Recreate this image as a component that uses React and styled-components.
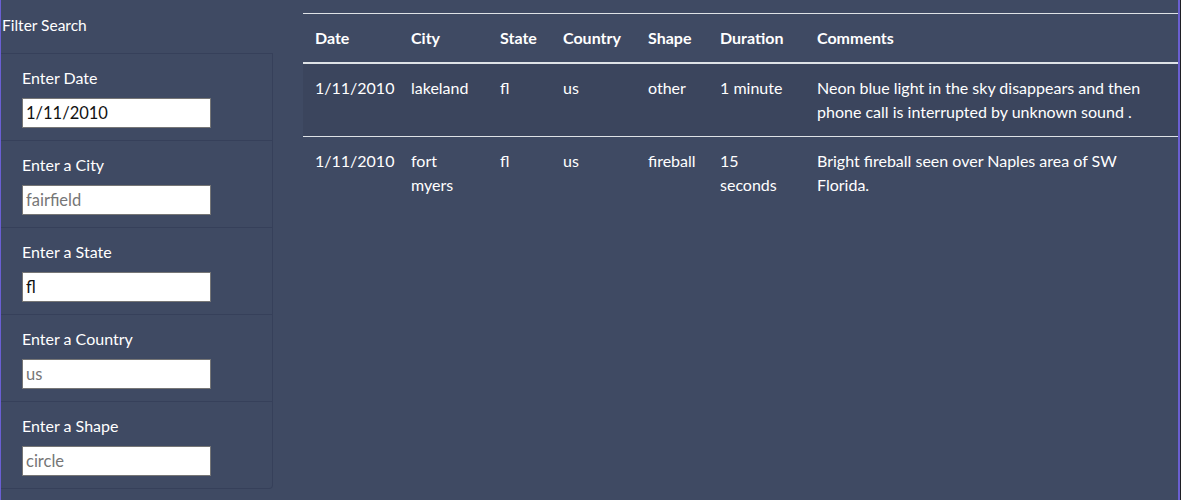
import React from "react";
import styled, { createGlobalStyle } from "styled-components";

const GlobalStyle = createGlobalStyle`
  html, body {
    margin: 0;
    padding: 0;
    background: #1f1f24;
  }
  body {
    font-family: Lato, "Liberation Sans", sans-serif;
    font-size: 16px;
    line-height: 1.5;
    color: #ffffff;
  }
  * { box-sizing: border-box; }
`;

const Frame = styled.div`
  width: 1180px;
  min-height: 500px;
  background: #3f4a63;
  border-left: 1px solid #6a5fd2;
  border-right: 2px solid #6a5fd2;
  display: grid;
  grid-template-columns: 272px 1fr;
  column-gap: 30px;
  align-items: start;
`;

const Sidebar = styled.aside`
  display: flex;
  flex-direction: column;
`;

const SidebarTitle = styled.div`
  font-size: 15.5px;
  line-height: 24px;
  padding: 13px 0 16px 1px;
`;

const FilterList = styled.ul`
  list-style: none;
  margin: 0;
  padding: 0;
  border: 1px solid #36405a;
  border-left: none;
  border-radius: 0 0 4px 0;
`;

const FilterItem = styled.li`
  padding: 12px 20px 12px 21px;
  border-top: ${(p) => (p.$first ? "none" : "1px solid #36405a")};
  display: flex;
  flex-direction: column;
  align-items: flex-start;
`;

const Label = styled.label`
  font-size: 16px;
  line-height: 24px;
  margin-bottom: 8px;
  color: #ffffff;
`;

const Input = styled.input`
  width: 189px;
  height: 30px;
  border: 1px solid #767676;
  padding: 1px 3px;
  font-family: Lato, "Liberation Sans", sans-serif;
  font-size: 16.5px;
  color: #111;
  background: #fff;
  &::placeholder {
    color: #767676;
  }
`;

const Main = styled.main`
  padding-top: 13px;
`;

const Table = styled.table`
  width: 875px;
  border-collapse: collapse;
  table-layout: fixed;
`;

const Th = styled.th`
  text-align: left;
  font-weight: 700;
  padding: 12px;
  line-height: 24px;
  border-top: 1px solid #dee2e6;
  border-bottom: 2px solid #dee2e6;
  vertical-align: bottom;
`;

const Row = styled.tr`
  background: ${(p) => (p.$striped ? "rgba(0,0,0,0.06)" : "transparent")};
`;

const Td = styled.td`
  padding: 12px;
  line-height: 24px;
  vertical-align: top;
  border-top: ${(p) => (p.$first ? "none" : "1px solid #dee2e6")};
`;

const filters = [
  { label: "Enter Date", value: "1/11/2010" },
  { label: "Enter a City", placeholder: "fairfield" },
  { label: "Enter a State", value: "fl" },
  { label: "Enter a Country", placeholder: "us" },
  { label: "Enter a Shape", placeholder: "circle" },
];

const columns = [
  { name: "Date", width: 96 },
  { name: "City", width: 89 },
  { name: "State", width: 63 },
  { name: "Country", width: 85 },
  { name: "Shape", width: 72 },
  { name: "Duration", width: 97 },
  { name: "Comments" },
];

const rows = [
  ["1/11/2010", "lakeland", "fl", "us", "other", "1 minute", "Neon blue light in the sky disappears and then phone call is interrupted by unknown sound ."],
  ["1/11/2010", "fort myers", "fl", "us", "fireball", "15 seconds", "Bright fireball seen over Naples area of SW Florida."],
];

export default function App() {
  return (
    <>
      <GlobalStyle />
      <Frame>
        <Sidebar>
          <SidebarTitle>Filter Search</SidebarTitle>
          <FilterList>
            {filters.map((f, i) => (
              <FilterItem key={f.label} $first={i === 0}>
                <Label>{f.label}</Label>
                <Input
                  type="text"
                  defaultValue={f.value}
                  placeholder={f.placeholder}
                />
              </FilterItem>
            ))}
          </FilterList>
        </Sidebar>
        <Main>
          <Table>
            <colgroup>
              {columns.map((c) => (
                <col key={c.name} style={c.width ? { width: c.width } : undefined} />
              ))}
            </colgroup>
            <thead>
              <tr>
                {columns.map((c) => (
                  <Th key={c.name}>{c.name}</Th>
                ))}
              </tr>
            </thead>
            <tbody>
              {rows.map((r, i) => (
                <Row key={i} $striped={i % 2 === 0}>
                  {r.map((cell, j) => (
                    <Td key={j} $first={i === 0}>{cell}</Td>
                  ))}
                </Row>
              ))}
            </tbody>
          </Table>
        </Main>
      </Frame>
    </>
  );
}
